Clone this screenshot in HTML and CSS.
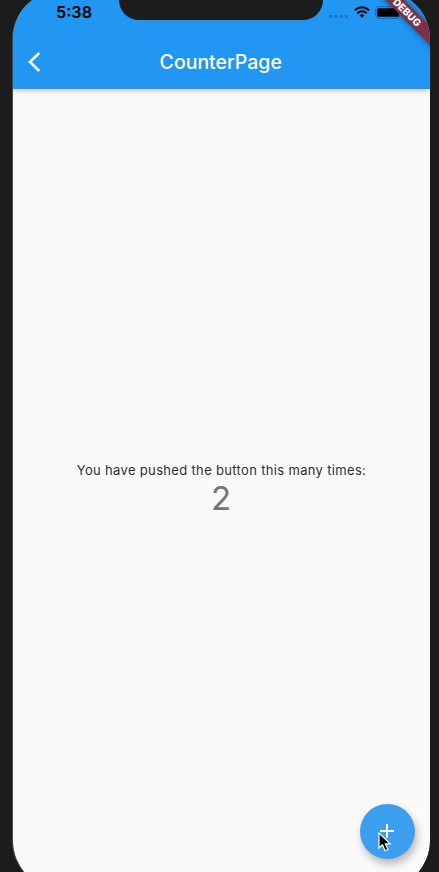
FILE: index.html
```html
<!DOCTYPE html>
<html lang="en">
<head>
<meta charset="utf-8">
<title>CounterPage</title>
<link rel="stylesheet" href="styles.css">
</head>
<body>
<div class="device">
  <div class="screen">
    <header class="app-bar">
      <div class="status">
        <span class="time">5:38</span>
        <span class="indicators">
          <svg class="signal" width="20" height="4" viewBox="0 0 20 4"><path d="M0 0h3v3h-3zM5.3 0h3v3h-3zM10.6 0h3v3h-3zM15.9 0h3v3h-3z"/></svg>
          <svg class="wifi" width="16" height="12" viewBox="0 0 16 12" fill="none"><path d="M.8 4.300Q8-2 15.200 4.300M3.300 7.200Q8 3.200 12.700 7.200" stroke="#000" stroke-width="1.900"/><path d="M5.600 9.300Q8 7.300 10.400 9.300L8 12z" fill="#000"/></svg>
          <svg class="battery" width="27" height="13" viewBox="0 0 27 13"><rect x=".7" y=".7" width="24" height="11.6" rx="3" fill="none" stroke="#1769aa"/><rect x="2.2" y="2.2" width="21.500" height="8.6" rx="1.5"/></svg>
        </span>
      </div>
      <div class="toolbar">
        <svg class="back" width="13" height="20" viewBox="0 0 13 20" fill="none"><path d="M11.2 1L2 10l9.200 9" stroke="#fff" stroke-width="2.600"/></svg>
        <h1 class="title">CounterPage</h1>
      </div>
    </header>
    <main class="content">
      <p class="message">You have pushed the button this many times:</p>
      <p class="count">2</p>
    </main>
    <button class="fab" aria-label="Increment"><svg width="16" height="16" viewBox="0 0 16 16"><path d="M8 1v14M1 8h14" stroke="#fff" stroke-width="2"/></svg></button>
    <div class="banner">DEBUG</div>
  </div>
  <div class="notch"></div>
  <svg class="cursor" width="14" height="20" viewBox="0 0 14 20"><path d="M1 1v15l3.500-3.300 2.600 6 2.800-1.200-2.600-5.700h5z" stroke="#fff" stroke-width="1.200"/></svg>
</div>
</body>
</html>
```
FILE: styles.css
```css
* { box-sizing: border-box; }
body { margin: 0; overflow: hidden; background: #1b1d1c; font-family: Inter, "Liberation Sans", sans-serif; }
.device { position: relative; width: 439px; height: 872px; overflow: hidden; padding-left: 12px; }
.screen {
  position: relative;
  display: flex;
  flex-direction: column;
  width: 418px;
  height: 898px;
  margin-top: -9px;
  border-left: 1px solid rgba(120, 120, 116, .5);
  border-radius: 48px;
  overflow: hidden;
  background: #fafafa;
  background-clip: padding-box;
}
.app-bar {
  flex: none;
  height: 98px;
  padding-top: 9px;
  background: #2196f3;
  box-shadow: 0 1px 5px rgba(0, 0, 0, .3);
}
.status { display: flex; justify-content: space-between; height: 34px; padding: 4px 0 0 43px; }
.time { font-size: 16.2px; line-height: 16px; font-weight: 600; color: #000; }
.indicators { display: flex; align-items: flex-start; width: 101px; }
.signal { margin-top: 11px; fill: #1c76bf; }
.wifi { margin: 2px 0 0 5px; }
.battery { margin: 2px 0 0 5px; }
.toolbar { display: flex; align-items: center; height: 55px; padding: 0 14px; }
.back { flex: none; margin-left: .5px; }
.title { flex: 1; margin: 0 16px 0 1px; text-align: center; color: #fff; font-size: 19.5px; line-height: 24px; font-weight: 500; letter-spacing: 0; }
.content { height: 783px; display: flex; flex-direction: column; align-items: center; justify-content: center; }
.message { margin: 17px 0 0; font-size: 13px; line-height: 19px; letter-spacing: .33px; white-space: nowrap; color: #303030; }
.count { margin: 0 1px 0 0; font-size: 33px; line-height: 37px; font-weight: 400; color: #757575; }
.fab {
  position: absolute;
  left: 346.5px;
  top: 812.5px;
  width: 55px;
  height: 55px;
  padding: 0;
  border: 0;
  border-radius: 50%;
  display: flex;
  align-items: center;
  justify-content: center;
  background: #3b9eee;
  box-shadow: 2px 5px 8px rgba(0, 0, 0, .28);
}
.banner {
  position: absolute;
  left: 344px;
  top: 14.5px;
  width: 100px;
  height: 13px;
  transform: rotate(45deg);
  background: #7d3048;
  color: #fff;
  font-size: 10px;
  line-height: 13px;
  font-weight: 800;
  text-align: center;
  box-shadow: 0 0 6px rgba(0, 0, 0, .5);
}
.notch { position: absolute; left: 119px; top: -20px; width: 204px; height: 39.5px; border-radius: 0 0 20px 20px; background: #1b1d1c; }
.cursor { position: absolute; left: 378px; top: 832px; }
```
